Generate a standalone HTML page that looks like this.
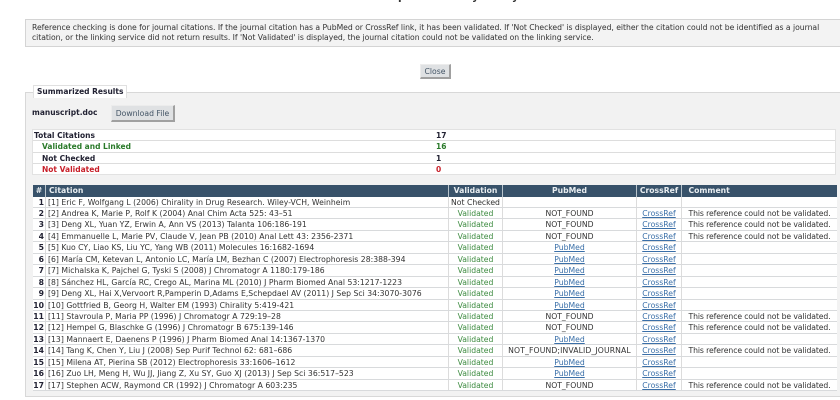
<!DOCTYPE html>
<html><head><meta charset="utf-8"><style>
html,body{margin:0;padding:0;width:840px;height:400px;overflow:hidden;background:#fff}
body{position:relative;font-family:"DejaVu Sans","Liberation Sans",sans-serif;font-size:7.7px;color:#333;filter:blur(.3px)}
.a{position:absolute;white-space:nowrap}
.btn{position:absolute;background:#dfe1e3;border:1px solid #ececec;border-right:2px solid #a0a0a0;border-bottom:2px solid #a0a0a0;box-sizing:border-box;text-align:center;color:#456;font-size:7.7px}
#sum{position:absolute;left:32px;top:129px;width:804px;height:46px;background:#fff;border:1px solid #e2e2e2;box-sizing:border-box;font-weight:bold;color:#223;font-size:7.5px}
#sum div{height:11.4px;line-height:11px;border-bottom:1px solid #ddd;box-sizing:border-box;position:relative;padding-left:1px}
#sum b{position:absolute;left:403px;top:0}
#sum .i{padding-left:9px}
#t{position:absolute;left:33px;top:185px;width:804px;background:#fff}
.r{display:flex;height:11.44px;line-height:11px;border-bottom:1px solid #d8dadc;box-sizing:border-box}
.r span{display:block;box-sizing:border-box;white-space:nowrap;overflow:hidden;border-right:1px solid #dcdcdc}
.n{width:13px;font-weight:bold;text-align:right;padding-right:1px;color:#223}
.c{width:403px;padding-left:2px;letter-spacing:.02px}
.v{width:54px;text-align:center;color:#3d8b40}
.p{width:134px;text-align:center}
.x{width:45px;text-align:center}
.m{width:155px;padding-left:6.5px;border-right:0!important;letter-spacing:-.1px}
u{color:#3a6fa8}
.h{height:11.6px;background:#38526a;color:#e8edf0;font-weight:bold;border:0;line-height:11.5px}
.h span{border-right:1px solid #b8c4cc}
.h .v,.h .n{color:#e8edf0}
.h .c{padding-left:3px}
.h .m{letter-spacing:0}
</style></head><body>
<div class="a" style="left:345px;top:-9px;font-size:10.5px;font-weight:bold;color:#333;width:180px;letter-spacing:.7px">Results produced by analysis</div>

<div class="a" style="left:25px;top:19px;width:815px;height:28px;background:#f3f3f3;border:1px solid #d4d4d4;border-right:0;box-sizing:border-box"></div>
<div class="a" style="left:32px;top:23px;line-height:9.6px;letter-spacing:-.04px">Reference checking is done for journal citations. If the journal citation has a PubMed or CrossRef link, it has been validated. If 'Not Checked' is displayed, either the citation could not be identified as a journal<br>citation, or the linking service did not return results. If 'Not Validated' is displayed, the journal citation could not be validated on the linking service.</div>

<div class="btn" style="left:420px;top:64px;width:31px;height:15px;line-height:13px">Close</div>

<div class="a" style="left:25px;top:92px;width:815px;height:305px;background:#f2f2f2;border:1px solid #d8d8d8;border-right:0;box-sizing:border-box"></div>
<div class="a" style="left:33px;top:85px;width:94px;height:13px;background:#fff;border:1px solid #e0e0e0;border-bottom:0;box-sizing:border-box;font-weight:bold;font-size:7.5px;line-height:12px;padding-left:3px;color:#223">Summarized Results</div>
<div class="a" style="left:32px;top:108px;font-weight:bold;font-size:7.5px;color:#223">manuscript.doc</div>
<div class="btn" style="left:111px;top:105px;width:64px;height:17px;line-height:15px">Download File</div>

<div id="sum">
<div>Total Citations<b>17</b></div>
<div class="i" style="color:#2a7a2a">Validated and Linked<b>16</b></div>
<div class="i">Not Checked<b>1</b></div>
<div class="i" style="color:#c8202a;border:0">Not Validated<b>0</b></div>
</div>

<div id="t">
<div class="r h"><span class="n" style="text-align:center;padding:0">#</span><span class="c" style="width:403px">Citation</span><span class="v">Validation</span><span class="p">PubMed</span><span class="x">CrossRef</span><span class="m">Comment</span></div>
<div class="r"><span class="n">1</span><span class="c">[1] Eric F, Wolfgang L (2006) Chirality in Drug Research. Wiley-VCH, Weinheim</span><span class="v" style="color:#333">Not Checked</span><span class="p"></span><span class="x"></span><span class="m"></span></div>
<div class="r"><span class="n">2</span><span class="c">[2] Andrea K, Marie P, Rolf K (2004) Anal Chim Acta 525: 43–51</span><span class="v">Validated</span><span class="p">NOT_FOUND</span><span class="x"><u>CrossRef</u></span><span class="m">This reference could not be validated.</span></div>
<div class="r"><span class="n">3</span><span class="c">[3] Deng XL, Yuan YZ, Erwin A, Ann VS (2013) Talanta 106:186-191</span><span class="v">Validated</span><span class="p">NOT_FOUND</span><span class="x"><u>CrossRef</u></span><span class="m">This reference could not be validated.</span></div>
<div class="r"><span class="n">4</span><span class="c">[4] Emmanuelle L, Marie PV, Claude V, Jean PB (2010) Anal Lett 43: 2356-2371</span><span class="v">Validated</span><span class="p">NOT_FOUND</span><span class="x"><u>CrossRef</u></span><span class="m">This reference could not be validated.</span></div>
<div class="r"><span class="n">5</span><span class="c">[5] Kuo CY, Liao KS, Liu YC, Yang WB (2011) Molecules 16:1682-1694</span><span class="v">Validated</span><span class="p"><u>PubMed</u></span><span class="x"><u>CrossRef</u></span><span class="m"></span></div>
<div class="r"><span class="n">6</span><span class="c">[6] María CM, Ketevan L, Antonio LC, María LM, Bezhan C (2007) Electrophoresis 28:388-394</span><span class="v">Validated</span><span class="p"><u>PubMed</u></span><span class="x"><u>CrossRef</u></span><span class="m"></span></div>
<div class="r"><span class="n">7</span><span class="c">[7] Michalska K, Pajchel G, Tyski S (2008) J Chromatogr A 1180:179-186</span><span class="v">Validated</span><span class="p"><u>PubMed</u></span><span class="x"><u>CrossRef</u></span><span class="m"></span></div>
<div class="r"><span class="n">8</span><span class="c">[8] Sánchez HL, García RC, Crego AL, Marina ML (2010) J Pharm Biomed Anal 53:1217-1223</span><span class="v">Validated</span><span class="p"><u>PubMed</u></span><span class="x"><u>CrossRef</u></span><span class="m"></span></div>
<div class="r"><span class="n">9</span><span class="c">[9] Deng XL, Hai X,Vervoort R,Pamperin D,Adams E,Schepdael AV (2011) J Sep Sci 34:3070-3076</span><span class="v">Validated</span><span class="p"><u>PubMed</u></span><span class="x"><u>CrossRef</u></span><span class="m"></span></div>
<div class="r"><span class="n">10</span><span class="c">[10] Gottfried B, Georg H, Walter EM (1993) Chirality 5:419-421</span><span class="v">Validated</span><span class="p"><u>PubMed</u></span><span class="x"><u>CrossRef</u></span><span class="m"></span></div>
<div class="r"><span class="n">11</span><span class="c">[11] Stavroula P, Maria PP (1996) J Chromatogr A 729:19–28</span><span class="v">Validated</span><span class="p">NOT_FOUND</span><span class="x"><u>CrossRef</u></span><span class="m">This reference could not be validated.</span></div>
<div class="r"><span class="n">12</span><span class="c">[12] Hempel G, Blaschke G (1996) J Chromatogr B 675:139-146</span><span class="v">Validated</span><span class="p">NOT_FOUND</span><span class="x"><u>CrossRef</u></span><span class="m">This reference could not be validated.</span></div>
<div class="r"><span class="n">13</span><span class="c">[13] Mannaert E, Daenens P (1996) J Pharm Biomed Anal 14:1367-1370</span><span class="v">Validated</span><span class="p"><u>PubMed</u></span><span class="x"><u>CrossRef</u></span><span class="m"></span></div>
<div class="r"><span class="n">14</span><span class="c">[14] Tang K, Chen Y, Liu J (2008) Sep Purif Technol 62: 681–686</span><span class="v">Validated</span><span class="p" style="letter-spacing:.12px">NOT_FOUND;INVALID_JOURNAL</span><span class="x"><u>CrossRef</u></span><span class="m">This reference could not be validated.</span></div>
<div class="r"><span class="n">15</span><span class="c">[15] Milena AT, Pierina SB (2012) Electrophoresis 33:1606–1612</span><span class="v">Validated</span><span class="p"><u>PubMed</u></span><span class="x"><u>CrossRef</u></span><span class="m"></span></div>
<div class="r"><span class="n">16</span><span class="c">[16] Zuo LH, Meng H, Wu JJ, Jiang Z, Xu SY, Guo XJ (2013) J Sep Sci 36:517–523</span><span class="v">Validated</span><span class="p"><u>PubMed</u></span><span class="x"><u>CrossRef</u></span><span class="m"></span></div>
<div class="r"><span class="n">17</span><span class="c">[17] Stephen ACW, Raymond CR (1992) J Chromatogr A 603:235</span><span class="v">Validated</span><span class="p">NOT_FOUND</span><span class="x"><u>CrossRef</u></span><span class="m">This reference could not be validated.</span></div>
</div>
</body></html>
